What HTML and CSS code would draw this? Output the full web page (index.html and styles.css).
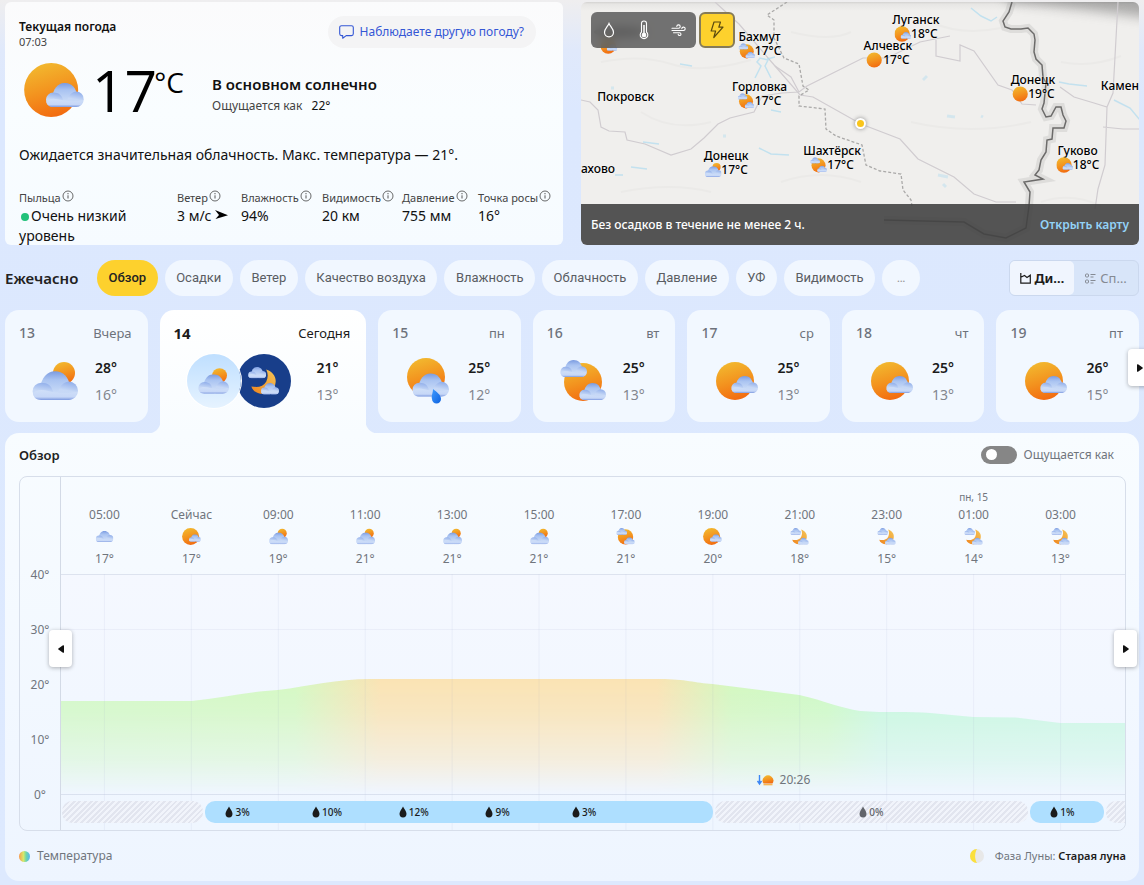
FILE: index.html
```html
<!DOCTYPE html>
<html lang="ru">
<head>
<meta charset="utf-8">
<meta name="viewport" content="width=device-width, initial-scale=1">
<title>Погода</title>
<link rel="stylesheet" href="styles.css">
</head>
<body>
<svg class="sprite" width="0" height="0" aria-hidden="true">
  <defs>
    <linearGradient id="gSun" x1=".3" y1="0" x2=".6" y2="1"><stop offset="0" stop-color="#f2b92f"/><stop offset=".5" stop-color="#f3941f"/><stop offset="1" stop-color="#f26a10"/></linearGradient>
    <linearGradient id="gMid" x1="0" y1="0" x2="0" y2="1"><stop offset="0" stop-color="#7b9be0"/><stop offset=".35" stop-color="#a9c3f1"/><stop offset="1" stop-color="#cfdff8"/></linearGradient>
    <linearGradient id="gSide" x1=".6" y1="0" x2=".4" y2="1"><stop offset="0" stop-color="#8fadea"/><stop offset=".5" stop-color="#c6d8f6"/><stop offset="1" stop-color="#c9d9f7"/></linearGradient>
    <linearGradient id="gBase" x1="0" y1="0" x2="0" y2="1"><stop offset="0" stop-color="#cfdff8"/><stop offset=".7" stop-color="#c6d7f7"/><stop offset="1" stop-color="#7f9be0"/></linearGradient>
    <linearGradient id="gDrop" x1="0" y1="0" x2="1" y2="1"><stop offset="0" stop-color="#3f9bff"/><stop offset="1" stop-color="#0d62e0"/></linearGradient>
    <linearGradient id="gMoon" x1="1" y1="0" x2="0" y2="1"><stop offset="0" stop-color="#f4c558"/><stop offset="1" stop-color="#f0851d"/></linearGradient>
    <symbol id="cloud" viewBox="0 0 40 25">
      <path fill="url(#gMid)" d="M7 15C8 6 13 0 20 0s12 5 13 13v8H7z"/>
      <path fill="url(#gSide)" d="M32 9a8 8 0 0 1 0 16h-9c-2-8 2-15 9-16z"/>
      <path fill="url(#gSide)" d="M8 10c6 0 9 3 10 7l3 8H8A7.5 7.5 0 0 1 8 10z"/>
      <path fill="url(#gBase)" d="M1 19c3-3 8-3 12-2 7 2 17 3 26 1 0 4-3 7-7 7H8c-4 0-7-2-7-6z"/>
    </symbol>
    <symbol id="sun" viewBox="0 0 40 40"><circle cx="20" cy="20" r="19" fill="url(#gSun)"/></symbol>
    <symbol id="sun-cloud" viewBox="0 0 42 38"><circle cx="19" cy="19" r="19" fill="url(#gSun)"/><use href="#cloud" x="15" y="14" width="27" height="17"/></symbol>
    <symbol id="cloud-sun" viewBox="0 0 46 38"><circle cx="32" cy="11" r="11" fill="url(#gSun)"/><use href="#cloud" x="0" y="9" width="46" height="29"/></symbol>
    <symbol id="sun-rain" viewBox="0 0 42 46"><circle cx="19" cy="19" r="19" fill="url(#gSun)"/><use href="#cloud" x="5" y="15" width="37" height="24"/><path fill="url(#gDrop)" d="M26 31c4 3 8 6 8 10a4 4 0 0 1-9 0c-1-3 1-6 1-10z"/></symbol>
    <symbol id="sun-clouds" viewBox="0 0 46 42"><circle cx="23" cy="22" r="19" fill="url(#gSun)"/><use href="#cloud" x="0" y="0" width="27" height="17"/><use href="#cloud" x="19" y="23" width="27" height="17"/></symbol>
    <symbol id="moon-clouds" viewBox="0 0 46 42"><path fill="url(#gMoon)" d="M27 4c9 3 15 10 14 19-1 10-9 17-19 17-8 0-15-4-17-11 10 2 18 0 22-7 3-6 3-12 0-18z"/><use href="#cloud" x="0" y="0" width="27" height="17"/><use href="#cloud" x="19" y="24" width="27" height="17"/></symbol>
    <symbol id="only-cloud" viewBox="0 0 46 42"><use href="#cloud" x="1" y="7" width="44" height="28"/></symbol>
    <symbol id="info" viewBox="0 0 12 12"><circle cx="6" cy="6" r="5" fill="none" stroke="currentColor" stroke-width=".8"/><path d="M6 5.3v3.2" stroke="currentColor" stroke-width=".9"/><circle cx="6" cy="3.7" r=".6" fill="currentColor"/></symbol>
    <symbol id="drop" viewBox="0 0 8 12"><path fill="currentColor" d="M4 .5c1 2.500 3.500 4.700 3.500 7.300a3.500 3.700 0 0 1-7 0C.5 5.200 3 3 4 .5z"/></symbol>
    <symbol id="tri" viewBox="0 0 6 8"><path fill="currentColor" d="M0 .8C0 .2.6 0 1 .3l4.600 3.200c.4.300.4.700 0 1L1 7.700C.6 8 0 7.800 0 7.200z"/></symbol>
  </defs>
</svg>

<main class="page">
  <section class="top">
    <article class="card current">
      <header class="current-head">
        <div>
          <h1 class="current-title">Текущая погода</h1>
          <div class="current-time">07:03</div>
        </div>
        <button class="feedback" type="button">
          <svg width="15" height="14" viewBox="0 0 15 14" fill="none" stroke="currentColor" stroke-width="1.100" stroke-linejoin="round"><path d="M2.500.7h10a1.800 1.800 0 0 1 1.800 1.800v6.300a1.800 1.800 0 0 1-1.800 1.800H7.200L3.700 13.200v-2.600H2.500A1.800 1.800 0 0 1 .7 8.800V2.500A1.800 1.800 0 0 1 2.500.7z"/></svg>
          Наблюдаете другую погоду?
        </button>
      </header>
      <div class="current-main">
        <svg class="current-icon" aria-hidden="true"><use href="#sun-cloud"/></svg>
        <div class="current-temp"><span class="deg">17</span><span class="unit">°C</span></div>
        <div class="current-text">
          <div class="current-cond">В основном солнечно</div>
          <div class="current-feels">Ощущается как <b>22°</b></div>
        </div>
      </div>
      <p class="current-desc">Ожидается значительная облачность. Макс. температура — 21°.</p>
      <dl class="metrics">
        <div><dt>Пыльца <svg class="info"><use href="#info"/></svg></dt><dd><span class="dot"></span>Очень низкий уровень</dd></div>
        <div><dt>Ветер <svg class="info"><use href="#info"/></svg></dt><dd>3 м/с <svg class="arrow" viewBox="0 0 13 9"><path d="M0 0l13 5.200L.5 9l3.500-4z"/></svg></dd></div>
        <div><dt>Влажность <svg class="info"><use href="#info"/></svg></dt><dd>94%</dd></div>
        <div><dt>Видимость <svg class="info"><use href="#info"/></svg></dt><dd>20 км</dd></div>
        <div><dt>Давление <svg class="info"><use href="#info"/></svg></dt><dd>755 мм</dd></div>
        <div><dt>Точка росы <svg class="info"><use href="#info"/></svg></dt><dd>16°</dd></div>
      </dl>
    </article>

    <article class="map">
      <svg class="map-base" viewBox="0 0 558 243" preserveAspectRatio="xMidYMid slice" aria-hidden="true">
        <defs>
          <linearGradient id="mapShade" x1="0" y1="0" x2="0" y2="1"><stop offset="0" stop-color="#555" stop-opacity=".55"/><stop offset=".25" stop-color="#777" stop-opacity=".22"/><stop offset="1" stop-color="#888" stop-opacity="0"/></linearGradient>
          <filter id="soft" x="-20%" y="-60%" width="140%" height="220%"><feGaussianBlur stdDeviation="6"/></filter>
          <path id="frontier" d="M431 0l-3 10-6 9 2 6 6 2 10 0 7-1 6 6 1 6-1 12 2 7 6 6 1 12 3 6-2 20-2 6 4 8 5-1 5-9 5 0 2 8 3 6-2 7-11 0-1 11-5 1-1 12-5 8-2 10-4 5 8 4-19 3 6 10-1 14-3 22-20 10-22-4-20-12-80-2"/>
        </defs>
        <rect width="558" height="243" fill="#f0efed"/>
        <path fill="#777" opacity=".55" filter="url(#soft)" d="M425-12H580V18C540 12 490 6 425 0z"/>
        <rect width="558" height="9" fill="url(#mapShade)" opacity=".35"/>
        <g fill="none" stroke="#ebeae8" stroke-width="2"><path d="M20 60q40-8 70 2t80-4M210 30q40 10 60 0M60 110q30 20 70 10M200 180q40-14 80 0M350 20q30 14 70 6M330 120q60 14 120 0M480 60q30 6 60-6M40 190q50-10 90 0M460 200q30-10 60 4"/></g>
        <g fill="none" stroke="#d0ccd0" stroke-width="1.200">
          <path d="M0 98l9 2 8 8 3 17 8 4 16 1 2 8 18 4 26 11 20-6 13-11 14-14 12-6 24-6 8-16 20-3 17-1 8-6 28-14 28-14 24 0 33-16 30-6"/>
          <path d="M134 0l24 22 36 42 25 29 13 2 48 27 39 15 18 20 36 18 20 17 22 8 20 0"/>
          <path d="M194 64l16 11 8 15M355 38l0 16 24 5 0-16 14 6 24 34 14 5 10 14 14 1M479 85l14 10 20 6 13 4 6-14 5-91M526 105l-2 58-7 24-3 20M522 125l20 2 20 0"/>
        </g>
        <g fill="none" stroke="#aaa9a8" stroke-width="1.300" stroke-dasharray="3 2"><path d="M206 0l-20 13 7 5 0 18 10 20 15 6 4 22 6 4-10 6 0 10 26 3 1 20 10 7 26 9 4 20 14 6 21 3 2 16 8 10 1 6"/></g>
        <g fill="none" stroke="#afdcf0" stroke-width="1.500" opacity=".7"><path d="M174 76l6-12-4-4 3-4 8 2-3 6 6 12M186 57l8-2M99 62l12 2M390 6l10 8 10 5 6-4M62 140l16 2M178 146l12 6 18 1M478 80l10 2 18 2M533 98l16 8 10 12M34 173l8 0M190 108l10 2M50 165l16 2"/><path d="M366 114l8 1M400 114l2 1M342 78l4-4M357 173l10 2M362 182l3 3M142 134l3 0M30 86l3 0" stroke-width="3" opacity=".6"/></g>
        <use href="#frontier" fill="none" stroke="#a9a8a6" stroke-width="8" opacity=".25"/>
        <use href="#frontier" fill="none" stroke="#6c6b6a" stroke-width="1.500"/>
        <ellipse cx="39" cy="30" rx="26" ry="5" fill="#333" opacity=".7"/>
      </svg>
      <div class="pin pin-hidden"><span class="pin-row"><svg><use href="#sun-cloud"/></svg></span></div>
      <div class="pin pin-bakhmut"><span>Бахмут</span><span class="pin-row"><svg><use href="#sun-clouds"/></svg>17°C</span></div>
      <div class="pin pin-gorlovka"><span>Горловка</span><span class="pin-row"><svg><use href="#sun-clouds"/></svg>17°C</span></div>
      <div class="pin pin-donetsk"><span>Донецк</span><span class="pin-row"><svg><use href="#cloud-sun"/></svg>17°C</span></div>
      <div class="pin pin-shakhtersk"><span>Шахтёрск</span><span class="pin-row"><svg><use href="#sun-clouds"/></svg>17°C</span></div>
      <div class="pin pin-lugansk"><span>Луганск</span><span class="pin-row"><svg><use href="#sun-cloud"/></svg>18°C</span></div>
      <div class="pin pin-alchevsk"><span>Алчевск</span><span class="pin-row"><svg><use href="#sun"/></svg>17°C</span></div>
      <div class="pin pin-donetsk2"><span>Донецк</span><span class="pin-row"><svg><use href="#sun"/></svg>19°C</span></div>
      <div class="pin pin-gukovo"><span>Гуково</span><span class="pin-row"><svg><use href="#sun-cloud"/></svg>18°C</span></div>
      <div class="pin pin-pokrovsk"><span>Покровск</span></div>
      <div class="pin pin-left"><span>ахово</span></div>
      <div class="pin pin-right"><span>Камен</span></div>
      <span class="here"></span>
      <div class="map-tools">
        <div class="map-group">
          <button type="button" aria-label="Осадки"><svg width="12" height="16" viewBox="0 0 12 16" fill="none" stroke="currentColor" stroke-width="1.200"><path d="M6 1.500C7 4 10.500 7 10.500 10.300a4.500 4.500 0 0 1-9 0C1.500 7 5 4 6 1.500z"/></svg></button>
          <button type="button" aria-label="Температура"><svg width="10" height="20" viewBox="0 0 10 20" fill="none" stroke="currentColor" stroke-width="1.100"><path d="M2.500 12V3.500a2.500 2.500 0 0 1 5 0V12a3.800 3.800 0 1 1-5 0z"/><path d="M5 5v9" stroke-width="1.500"/><circle cx="5" cy="15" r="1.800" fill="currentColor"/></svg></button>
          <button type="button" aria-label="Ветер"><svg width="16" height="12" viewBox="0 0 16 12" fill="none" stroke="currentColor" stroke-width="1.100" stroke-linecap="round"><path d="M1 4.300h6.500a1.700 1.700 0 1 0-1.700-1.900M1 6.500h11.500a1.700 1.700 0 1 0-1.700-1.900M2.500 8.700h6a1.400 1.400 0 1 1-1.300 1.700"/></svg></button>
        </div>
        <button class="map-bolt" type="button" aria-label="Гроза"><svg width="16" height="18" viewBox="0 0 16 18" fill="none" stroke="#5b4a10" stroke-width="1.200" stroke-linejoin="round"><path d="M5 1h6.500L9.800 6.200H14L4.800 16.500 6.600 10H2.200z"/></svg></button>
      </div>
      <footer class="map-foot"><span>Без осадков в течение не менее 2 ч.</span><a href="#map">Открыть карту</a></footer>
    </article>
  </section>

  <nav class="tabs">
    <h2 class="tabs-title">Ежечасно</h2>
    <div class="pills">
      <button class="pill active" type="button">Обзор</button>
      <button class="pill" type="button">Осадки</button>
      <button class="pill" type="button">Ветер</button>
      <button class="pill" type="button">Качество воздуха</button>
      <button class="pill" type="button">Влажность</button>
      <button class="pill" type="button">Облачность</button>
      <button class="pill" type="button">Давление</button>
      <button class="pill" type="button">УФ</button>
      <button class="pill" type="button">Видимость</button>
      <button class="pill more" type="button">…</button>
    </div>
    <div class="view">
      <button class="view-btn on" type="button"><svg width="11" height="11" viewBox="0 0 11 11" fill="none" stroke="currentColor" stroke-width="1.200"><path d="M.8 0v10.200H10.300V2.200L7 4.500 4.500 2.500.8 4.200"/></svg>Ди…</button>
      <button class="view-btn" type="button"><svg width="11" height="11" viewBox="0 0 11 11" fill="none" stroke="currentColor"><rect x=".5" y="1" width="3" height="3" rx="1"/><rect x=".5" y="7" width="3" height="3" rx="1"/><path d="M5.500 1.500h5M5.500 4h3M5.500 7.500h5M5.500 10h3"/></svg>Сп…</button>
    </div>
  </nav>

  <section class="days">
    <button class="day" type="button"><span class="num">13</span><span class="name">Вчера</span><svg class="day-icon"><use href="#cloud-sun"/></svg><span class="temps"><b>28°</b><i>16°</i></span></button>
    <button class="day today" type="button"><span class="num">14</span><span class="name">Сегодня</span><span class="orbs"><span class="orb light"><svg><use href="#cloud-sun"/></svg></span><span class="orb night"><svg><use href="#moon-clouds"/></svg></span></span><span class="temps"><b>21°</b><i>13°</i></span></button>
    <button class="day" type="button"><span class="num">15</span><span class="name">пн</span><svg class="day-icon"><use href="#sun-rain"/></svg><span class="temps"><b>25°</b><i>12°</i></span></button>
    <button class="day" type="button"><span class="num">16</span><span class="name">вт</span><svg class="day-icon"><use href="#sun-clouds"/></svg><span class="temps"><b>25°</b><i>13°</i></span></button>
    <button class="day" type="button"><span class="num">17</span><span class="name">ср</span><svg class="day-icon short"><use href="#sun-cloud"/></svg><span class="temps"><b>25°</b><i>13°</i></span></button>
    <button class="day" type="button"><span class="num">18</span><span class="name">чт</span><svg class="day-icon short"><use href="#sun-cloud"/></svg><span class="temps"><b>25°</b><i>13°</i></span></button>
    <button class="day" type="button"><span class="num">19</span><span class="name">пт</span><svg class="day-icon short"><use href="#sun-cloud"/></svg><span class="temps"><b>26°</b><i>15°</i></span></button>
    <button class="nav days-next" type="button" aria-label="Вперёд"><svg><use href="#tri"/></svg></button>
  </section>

  <section class="panel">
    <header class="panel-head">
      <h3>Обзор</h3>
      <label class="switch"><input type="checkbox"><span>Ощущается как</span></label>
    </header>
    <div class="chart">
      <div class="axis"><span>40°</span><span>30°</span><span>20°</span><span>10°</span><span>0°</span></div>
      <div class="plot">
        <div class="hours">
          <div class="hour"><span>05:00</span><svg><use href="#only-cloud"/></svg><span>17°</span></div>
          <div class="hour"><span>Сейчас</span><svg><use href="#sun-cloud"/></svg><span>17°</span></div>
          <div class="hour"><span>09:00</span><svg><use href="#cloud-sun"/></svg><span>19°</span></div>
          <div class="hour"><span>11:00</span><svg><use href="#cloud-sun"/></svg><span>21°</span></div>
          <div class="hour"><span>13:00</span><svg><use href="#cloud-sun"/></svg><span>21°</span></div>
          <div class="hour"><span>15:00</span><svg><use href="#cloud-sun"/></svg><span>21°</span></div>
          <div class="hour"><span>17:00</span><svg><use href="#sun-clouds"/></svg><span>21°</span></div>
          <div class="hour"><span>19:00</span><svg><use href="#sun-cloud"/></svg><span>20°</span></div>
          <div class="hour"><span>21:00</span><svg><use href="#moon-clouds"/></svg><span>18°</span></div>
          <div class="hour"><span>23:00</span><svg><use href="#moon-clouds"/></svg><span>15°</span></div>
          <div class="hour"><small>пн, 15</small><span>01:00</span><svg><use href="#moon-clouds"/></svg><span>14°</span></div>
          <div class="hour"><span>03:00</span><svg><use href="#moon-clouds"/></svg><span>13°</span></div>
        </div>
        <div class="graph">
          <svg class="curve" viewBox="0 0 1065 256" preserveAspectRatio="none" aria-hidden="true">
            <defs>
              <linearGradient id="heat"><stop offset="0" stop-color="#ccf8bc"/><stop offset=".22" stop-color="#cff8b8"/><stop offset=".3" stop-color="#fbdfa6"/><stop offset=".56" stop-color="#fbdfa6"/><stop offset=".63" stop-color="#cdf7b4"/><stop offset=".72" stop-color="#c6f9ba"/><stop offset=".77" stop-color="#c0f7d8"/><stop offset="1" stop-color="#c2f7de"/></linearGradient>
              <linearGradient id="fade" gradientUnits="userSpaceOnUse" x1="0" y1="104" x2="0" y2="220"><stop offset="0" stop-color="#fff" stop-opacity=".85"/><stop offset=".3" stop-color="#fff" stop-opacity=".7"/><stop offset=".7" stop-color="#fff" stop-opacity=".38"/><stop offset="1" stop-color="#fff" stop-opacity="0"/></linearGradient>
              <mask id="fadeMask"><rect width="1065" height="256" fill="url(#fade)"/></mask>
            </defs>
            <path mask="url(#fadeMask)" fill="url(#heat)" d="M0 127H131C160 124 185 118 217 116C250 112 275 105 310 105H600C625 105 635 109 652 110L739 121C765 127 780 134 800 137C825 139 850 137 870 139L913 143L955 143.500L1000 149L1065 149V220H0z"/>
            <path stroke="#8b9ac0" stroke-opacity=".1" d="M43.500 0V256M130.500 0V256M217.500 0V256M304.500 0V256M391.500 0V256M478.500 0V256M565.500 0V256M652.500 0V256M739.500 0V256M826.500 0V256M913.500 0V256M1000.500 0V256M0 55.500H1065"/>
            <path stroke="#b9c3d6" stroke-opacity=".4" d="M0 .5H1065M0 220.500H1065"/>
          </svg>
          <div class="sunset"><svg width="17" height="12" viewBox="0 0 17 12"><path d="M2.500 1v8M.5 7l2 3 2-3" fill="none" stroke="#3c86f4" stroke-width="1.400"/><path fill="url(#gSun)" d="M6.500 9.500A5.300 5.300 0 1 1 15.500 9.500z"/><path d="M6.500 10.700h9" stroke="#fbb040" stroke-width="1.200"/></svg>20:26</div>
          <div class="rain">
            <div class="seg dry"></div>
            <div class="seg wet series"><span><svg><use href="#drop"/></svg>3%</span><span><svg><use href="#drop"/></svg>10%</span><span><svg><use href="#drop"/></svg>12%</span><span><svg><use href="#drop"/></svg>9%</span><span><svg><use href="#drop"/></svg>3%</span></div>
            <div class="seg dry center"><span><svg><use href="#drop"/></svg>0%</span></div>
            <div class="seg wet single"><span><svg><use href="#drop"/></svg>1%</span></div>
            <div class="seg dry last"></div>
          </div>
        </div>
      </div>
      <button class="nav chart-prev" type="button" aria-label="Назад"><svg><use href="#tri"/></svg></button>
      <button class="nav chart-next" type="button" aria-label="Вперёд"><svg><use href="#tri"/></svg></button>
    </div>
    <footer class="legend">
      <span class="legend-temp"><span class="rainbow"></span>Температура</span>
      <span class="legend-moon"><svg width="14" height="14" viewBox="0 0 14 14"><circle cx="7" cy="7" r="7" fill="#e8e8e8"/><path fill="#fbe03c" d="M7 0a7 7 0 0 0 0 14C4.500 10 4.500 4 7 0z"/></svg><span>Фаза Луны: <b>Старая луна</b></span></span>
    </footer>
  </section>
</main>
</body>
</html>
```
FILE: styles.css
```css
* { box-sizing: border-box; }
body {
  margin: 0;
  overflow-x: hidden;
  font-family: "Noto Sans", "Open Sans", sans-serif;
  font-size: 13px;
  line-height: 16px;
  color: #111;
  background: linear-gradient(#efeeef 0, #e0e9fb 50px, #dce8fe 110px, #dde9fe 100%);
}
button { font: inherit; color: inherit; border: 0; padding: 0; margin: 0; background: none; cursor: pointer; }
h1, h2, h3, p, dl, dd { margin: 0; }
svg { display: block; flex: none; }
.sprite { position: absolute; }
.page { padding: 2px 5px 4px; }

/* Top row */
.top { display: grid; grid-template-columns: 1fr 1fr; gap: 18px; }
.card { background: linear-gradient(#fbfbfc, #f9fdff 45%, #f6fbff); border-radius: 6px; }
.current { padding: 14px 10px 0 14px; min-height: 243px; }
.current-head { display: flex; justify-content: space-between; padding-right: 17px; }
.current-title { font-size: 12px; font-weight: 600; line-height: 16px; padding-top: 3px; }
.current-time { font-size: 11px; line-height: 14px; color: #444; }
.feedback { display: flex; align-items: center; gap: 6px; height: 32px; padding: 0 12px 0 11px; border-radius: 16px; background: #f4f4f5; color: #3457d5; font-size: 12px; }
.current-main { display: flex; align-items: center; height: 74px; margin-top: 4px; }
.current-icon { width: 60px; height: 54px; margin: 0 8px 0 5px; }
.current-temp { display: flex; align-items: flex-start; width: 96px; height: 60px; color: #000; }
.deg { font-family: "Open Sans", sans-serif; font-size: 57px; line-height: 60px; }
.unit { font-family: "Open Sans", sans-serif; font-size: 28px; line-height: 32px; padding-top: 6px; margin-left: -3px; }
.current-text { padding: 10px 0 0 24px; }
.current-cond { font-size: 15px; font-weight: 600; line-height: 20px; white-space: nowrap; }
.current-feels { font-size: 12px; line-height: 20px; color: #444; padding-top: 2px; }
.current-feels b { font-weight: 400; color: #111; padding-left: 6px; }
.current-desc { margin-top: 18px; font-size: 14px; line-height: 20px; }
.metrics { display: grid; grid-template-columns: 158fr 64fr 81fr 80fr 76fr 75fr; margin: 25px 0 -2px; }
.metrics dt { display: flex; align-items: center; gap: 1px; font-size: 11px; line-height: 16px; color: #444; white-space: nowrap; }
.metrics dd { font-size: 14px; line-height: 20px; }
.metrics > :first-child dd { max-width: 120px; }
.info { width: 12px; height: 12px; margin-bottom: 4px; }
.dot { display: inline-block; width: 8px; height: 8px; margin: 0 2px; border-radius: 50%; background: #22c17a; }
.arrow { display: inline-block; width: 13px; height: 9px; vertical-align: 2px; }

/* Map */
.map { position: relative; display: flex; flex-direction: column; justify-content: space-between; border-radius: 6px; overflow: hidden; min-height: 243px; }
.map-base { position: absolute; inset: 0; width: 100%; height: 100%; }
.pin { position: absolute; display: flex; flex-direction: column; align-items: center; transform: translate(-50%, -8px); font-size: 12px; font-weight: 500; line-height: 14px; color: #000; white-space: nowrap; text-shadow: 0 0 2px #fff; }
.pin-row { display: flex; align-items: center; height: 14px; }
.pin-row svg { width: 17px; height: 16px; }
.pin-hidden { left: 5%; top: 45px; }
.pin-bakhmut { left: 32%; top: 36px; }
.pin-gorlovka { left: 32%; top: 86px; }
.pin-donetsk { left: 26%; top: 155px; }
.pin-shakhtersk { left: 45%; top: 150px; }
.pin-lugansk { left: 60%; top: 19px; }
.pin-alchevsk { left: 55%; top: 45px; }
.pin-donetsk2 { left: 81%; top: 79px; }
.pin-gukovo { left: 89%; top: 150px; }
.pin-pokrovsk { left: 8%; top: 96px; }
.pin-left { left: 0; top: 168px; transform: translateY(-8px); }
.pin-right { right: 0; top: 85px; transform: translateY(-8px); }
.here { position: absolute; left: 50%; top: 121px; width: 11px; height: 11px; margin: -5px; border: 2px solid #fff; border-radius: 50%; background: #f9c51c; box-shadow: 0 0 4px #888; }
.map-tools { position: relative; display: flex; gap: 3px; padding: 10px; }
.map-group { display: flex; height: 36px; border-radius: 6px; background: rgba(90, 90, 90, .85); backdrop-filter: blur(5px); color: #fff; }
.map-group button { display: grid; place-items: center; width: 35px; }
.map-bolt { display: grid; place-items: center; width: 36px; height: 36px; border: 2px solid #867b58; border-radius: 6px; background: #fdd12d; }
.map-foot { position: relative; display: flex; align-items: center; justify-content: space-between; height: 41px; padding: 0 10px; background: rgba(66, 66, 66, .9); color: #fff; font-size: 12px; font-weight: 500; }
.map-foot a { color: #93d2f7; text-decoration: none; font-weight: 600; }

/* Tabs */
.tabs { display: flex; align-items: center; padding: 15px 0 14px; }
.tabs-title { flex: none; width: 92px; font-size: 15px; font-weight: 600; color: #222; }
.pills { display: flex; flex: 1; gap: 7px; margin-right: 89px; }
.pill { flex: 1 0 auto; height: 36px; padding: 0 11px; border-radius: 18px; background: #f1f7ff; color: #5a5d63; font-family: Roboto, sans-serif; font-size: 13px; white-space: nowrap; }
.pill.active { background: #fdd12d; color: #222; font-weight: 500; }
.pill.more { flex: none; width: 38px; color: #999; }
.view { display: flex; flex: none; width: 130px; height: 36px; border: 1px solid #cbd8ee; border-radius: 6px; background: #d8e5f9; }
.view-btn { flex: 1; display: flex; align-items: center; justify-content: center; gap: 4px; border-radius: 5px; color: #858a93; font-size: 13px; }
.view-btn.on { background: #f0f5fe; color: #1b1b1b; font-weight: 700; }

/* Days */
.days { position: relative; display: grid; grid-template-columns: minmax(0, 142fr) minmax(0, 206fr) repeat(5, minmax(0, 142fr)); gap: 12px; }
.day { display: grid; grid-template-columns: 72px minmax(0, 1fr); grid-template-rows: 18px 54px; row-gap: 12px; align-content: start; height: 112px; margin-bottom: 11px; padding: 14px 16px 0 14px; border-radius: 14px; background: #f2f8ff; text-align: left; color: #6d727b; }
.num { font-size: 14px; font-weight: 500; line-height: 18px; }
.name { justify-self: end; font-size: 13px; line-height: 18px; white-space: nowrap; }
.day-icon { width: 46px; height: 46px; place-self: center; }
.day-icon.short { width: 42px; height: 38px; }
.temps { display: flex; flex-direction: column; padding-left: 4px; font-size: 14px; line-height: 27px; }
.temps b { font-weight: 600; color: #1b1b1b; }
.temps i { font-style: normal; color: #82868e; }
.today { position: relative; height: 123px; margin-bottom: 0; border-radius: 14px 14px 0 0; background: linear-gradient(#fff, #f8fcff); grid-template-columns: 139px minmax(0, 1fr); color: #1b1b1b; }
.today::before, .today::after { content: ""; position: absolute; bottom: 0; width: 12px; height: 12px; }
.today::before { right: 100%; background: radial-gradient(circle at 0 0, transparent 12px, #f8fcff 13px); }
.today::after { left: 100%; background: radial-gradient(circle at 100% 0, transparent 12px, #f8fcff 13px); }
.today .num { font-size: 15px; font-weight: 700; }
.orbs { display: flex; padding-left: 13px; }
.orb { display: grid; place-items: center; flex: none; width: 54px; height: 54px; border-radius: 50%; }
.orb svg { width: 31px; height: 30px; }
.orb.light { position: relative; z-index: 1; background: linear-gradient(#bfdfff, #e6f3ff); box-shadow: 0 0 0 1px #fff; }
.orb.night { margin-left: -4px; background: #183e8a; }
.nav { position: absolute; display: grid; place-items: center; width: 23px; height: 37px; border-radius: 4px; background: #fff; color: #111; box-shadow: 0 1px 4px rgba(0, 0, 0, .3); }
.nav svg { width: 6px; height: 8px; }
.days-next { right: -12px; top: 39px; }

/* Panel */
.panel { padding: 0 13px 0 14px; border-radius: 14px; background: linear-gradient(#f8fcff, #eef5ff); }
.panel-head { display: flex; align-items: center; justify-content: space-between; height: 43px; padding-right: 12px; }
.panel-head h3 { font-size: 13px; font-weight: 600; color: #222; }
.switch { display: flex; align-items: center; gap: 7px; color: #70757d; font-size: 12px; }
.switch input { appearance: none; display: flex; align-items: center; width: 36px; height: 18px; margin: 0; padding-left: 5px; border-radius: 9px; background: #868686; }
.switch input::before { content: ""; width: 11px; height: 11px; border-radius: 50%; background: #fff; }
.chart { position: relative; display: flex; border: 1px solid #d7deea; border-radius: 8px; color: #70757d; }
.axis { display: flex; flex-direction: column; gap: 39px; width: 41px; padding-top: 90px; border-right: 1px solid #d3dae6; text-align: center; font-size: 12px; }
.plot { flex: 1; min-width: 0; }
.hours { display: grid; grid-template-columns: repeat(12, 87fr) 21fr; height: 97px; padding-bottom: 7px; }
.hour { display: flex; flex-direction: column; align-items: center; justify-content: flex-end; font-size: 12px; }
.hour small { font-size: 10px; padding-bottom: 2px; }
.hour svg { width: 19px; height: 17px; margin: 5px 0 6px; }
.graph { position: relative; height: 256px; background: linear-gradient(#f5f8ff, #eff6ff); border-bottom-right-radius: 8px; overflow: hidden; }
.curve { width: 100%; height: 256px; }
.sunset { position: absolute; left: 65%; top: 198px; display: flex; align-items: center; gap: 6px; padding-left: 4px; font-size: 12px; }
.rain { position: absolute; inset: 227px 0 auto 0; display: grid; grid-template-columns: 142fr 509fr 315fr 74fr 19fr; gap: 2px; padding-left: 1px; font-size: 10px; font-weight: 500; color: #1b1b1b; }
.seg { display: flex; align-items: center; height: 22px; border-radius: 10px; }
.seg span { display: flex; align-items: center; gap: 2px; }
.seg svg { width: 8px; height: 12px; }
.wet { background: #aedfff; }
.dry { background: repeating-linear-gradient(135deg, #e2e5ef 0 2px, #f1f4fb 2px 4px); color: #62656b; }
.series { display: grid; grid-template-columns: repeat(5, 87fr) 54fr; padding-left: 20px; }
.center { justify-content: center; }
.single { padding-left: 20px; }
.last { border-radius: 10px 0 0 10px; }
.chart-prev { left: 29px; top: 153px; }
.chart-prev svg { transform: rotate(180deg); }
.chart-next { right: -12px; top: 153px; }
.legend { display: flex; align-items: center; justify-content: space-between; height: 50px; color: #70757d; font-size: 12px; }
.legend b { color: #1b1b1b; font-weight: 600; }
.legend-temp, .legend-moon { display: flex; align-items: center; gap: 7px; }
.legend-moon { gap: 11px; font-size: 11px; }
.rainbow { width: 11px; height: 11px; border-radius: 50%; background: linear-gradient(90deg, #f99a4f, #d8e86a 40%, #6fd6a8 65%, #55b4f5); }
```
